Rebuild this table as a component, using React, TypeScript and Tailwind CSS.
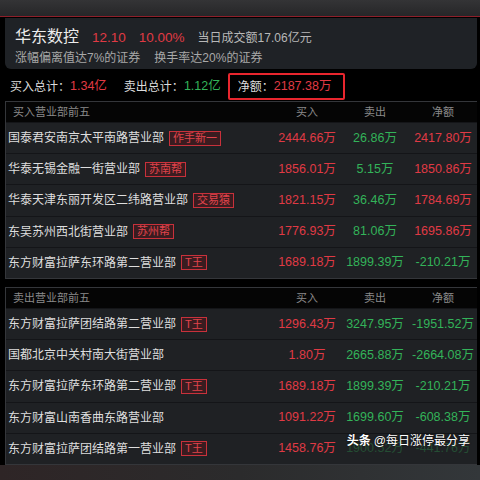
import React from 'react'

type Row = {
  name: string
  tag?: string
  buy: string
  sell: string
  net: string
  faded?: boolean
}

const buyRows: Row[] = [
  { name: '国泰君安南京太平南路营业部', tag: '作手新一', buy: '2444.66万', sell: '26.86万', net: '2417.80万' },
  { name: '华泰无锡金融一街营业部', tag: '苏南帮', buy: '1856.01万', sell: '5.15万', net: '1850.86万' },
  { name: '华泰天津东丽开发区二纬路营业部', tag: '交易猿', buy: '1821.15万', sell: '36.46万', net: '1784.69万' },
  { name: '东吴苏州西北街营业部', tag: '苏州帮', buy: '1776.93万', sell: '81.06万', net: '1695.86万' },
  { name: '东方财富拉萨东环路第二营业部', tag: 'T王', buy: '1689.18万', sell: '1899.39万', net: '-210.21万' },
]

const sellRows: Row[] = [
  { name: '东方财富拉萨团结路第二营业部', tag: 'T王', buy: '1296.43万', sell: '3247.95万', net: '-1951.52万' },
  { name: '国都北京中关村南大街营业部', buy: '1.80万', sell: '2665.88万', net: '-2664.08万' },
  { name: '东方财富拉萨东环路第二营业部', tag: 'T王', buy: '1689.18万', sell: '1899.39万', net: '-210.21万' },
  { name: '东方财富山南香曲东路营业部', buy: '1091.22万', sell: '1699.60万', net: '-608.38万' },
  { name: '东方财富拉萨团结路第一营业部', tag: 'T王', buy: '1458.76万', sell: '1900.52万', net: '-441.76万', faded: true },
]

const red = 'text-[#e03a44]'
const green = 'text-[#33b359]'

function Table({ title, rows }: { title: string; rows: Row[] }) {
  return (
    <div className="border border-[#34363a] border-r-0">
      <div className="flex items-center h-[20px] bg-[#050505] text-[11px] text-[#8a8a8a]">
        <div className="flex-1 pl-[7px]">{title}</div>
        <div className="w-[68px] text-center">买入</div>
        <div className="w-[68px] text-center">卖出</div>
        <div className="w-[68px] text-center">净额</div>
      </div>
      {rows.map((r, i) => (
        <div
          key={i}
          className="flex items-center h-[31.2px] bg-[#1f2124] border-t border-[#141518] text-[12.5px]"
        >
          <div className="flex-1 flex items-center pl-[2px] text-[#dedede] text-[12px] whitespace-nowrap">
            <span>{r.name}</span>
            {r.tag && (
              <span className="ml-[5px] px-[3px] h-[15px] leading-[13px] border border-[#c8313b] bg-[#3a1c20] text-[#e0444c] text-[11px]">
                {r.tag}
              </span>
            )}
          </div>
          <div className={`w-[68px] text-center ${red}`}>{r.buy}</div>
          <div className={`w-[68px] text-center ${green} ${r.faded ? 'opacity-30' : ''}`}>{r.sell}</div>
          <div className={`w-[68px] text-center ${r.net.startsWith('-') ? green : red} ${r.faded ? 'opacity-30' : ''}`}>
            {r.net}
          </div>
        </div>
      ))}
    </div>
  )
}

export default function App() {
  return (
    <div
      className="w-[480px] h-[480px] overflow-hidden bg-black flex flex-col"
      style={{ fontFamily: '"Liberation Sans", "Noto Sans CJK SC", sans-serif' }}
    >
      <div className="h-[17px] bg-gradient-to-b from-[#343436] to-[#262628] border-b border-[#8e1f2a] shrink-0" />

      <div className="ml-[5px] mr-[3px] mt-[1px] h-[51px] rounded-b-[6px] bg-[#1f2226] px-[10px] pt-[7px]">
        <div className="flex items-baseline">
          <span className="text-[16px] text-[#ececec]">华东数控</span>
          <span className={`ml-[13px] text-[13.5px] ${red}`}>12.10</span>
          <span className={`ml-[13px] text-[13.5px] ${red}`}>10.00%</span>
          <span className="ml-[13px] text-[12px] text-[#b8b8b8]">当日成交额17.06亿元</span>
        </div>
        <div className="text-[12px] text-[#a8a8a8]">
          <span>涨幅偏离值达7%的证券</span>
          <span className="ml-[14px]">换手率达20%的证券</span>
        </div>
      </div>

      <div className="flex items-center h-[29px] pl-[10px] text-[12px] text-[#dcdcdc] mt-[3px]">
        <span>买入总计：</span>
        <span className={`text-[12.5px] ${red}`}>1.34亿</span>
        <span className="ml-[17px]">卖出总计：</span>
        <span className={`text-[12.5px] ${green}`}>1.12亿</span>
        <div className="ml-[7px] h-[27px] w-[117px] border-2 border-[#e8262e] rounded-[2px] flex items-center pl-[8px]">
          <span>净额：</span>
          <span className={`text-[12.5px] ${red}`}>2187.38万</span>
        </div>
      </div>

      <div className="ml-[5px] mr-[3px]">
        <Table title="买入营业部前五" rows={buyRows} />
      </div>

      <div className="ml-[5px] mr-[3px] mt-[8px]">
        <Table title="卖出营业部前五" rows={sellRows} />
      </div>

      <div className="relative flex-1 bg-gradient-to-r from-[#2e2526] via-[#2b2b2c] to-[#33373a]">
        <div className="absolute right-[10px] -top-[33px] text-[12px] text-white [text-shadow:0_0_2px_rgba(0,0,0,0.9)]">
          <span className="font-bold">头条</span>
          <span className="ml-[3px]">@每日涨停最分享</span>
        </div>
      </div>
    </div>
  )
}
